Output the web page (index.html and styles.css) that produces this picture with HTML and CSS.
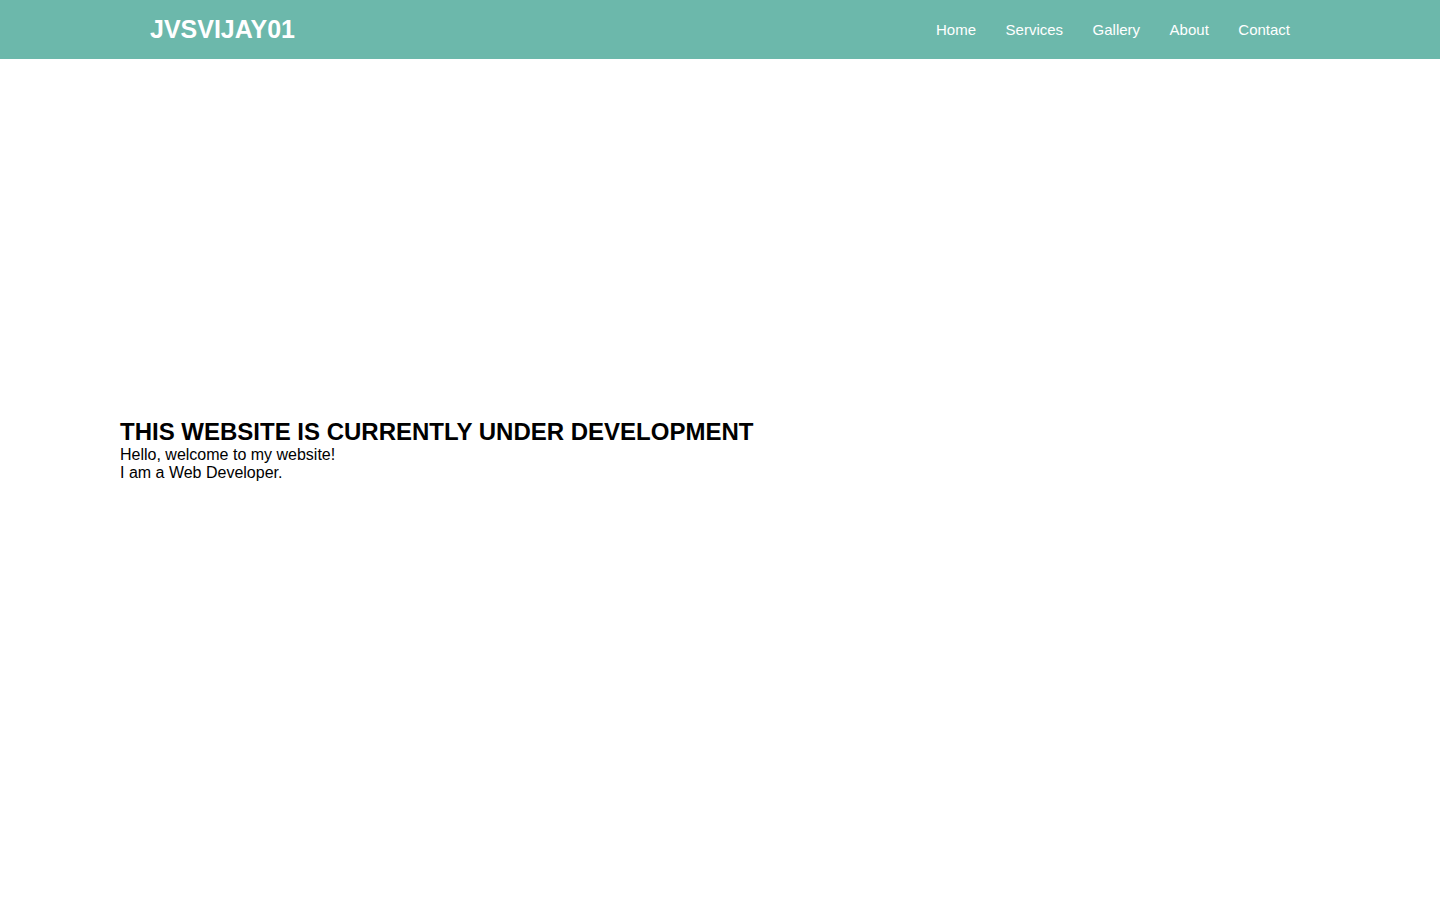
FILE: index.html
```html
<!DOCTYPE html>
<html lang="en">
<head>
<meta charset="utf-8">
<title>JVSVIJAY01</title>
<link rel="stylesheet" href="styles.css">
</head>
<body>
<header class="site-header">
  <div class="logo">JVSVIJAY01</div>
  <nav class="nav">
    <a href="#">Home</a>
    <a href="#">Services</a>
    <a href="#">Gallery</a>
    <a href="#">About</a>
    <a href="#">Contact</a>
  </nav>
</header>
<main class="hero">
  <div class="hero-text">
    <h1>THIS WEBSITE IS CURRENTLY UNDER DEVELOPMENT</h1>
    <p>Hello, welcome to my website!</p>
    <p>I am a Web Developer.</p>
  </div>
</main>
</body>
</html>
```
FILE: styles.css
```css
* { box-sizing: border-box; }
html, body { margin: 0; padding: 0; }
body {
  font-family: "Liberation Sans", Arial, sans-serif;
  color: #000;
  background: #fff;
}
.site-header {
  height: 59px;
  background: #6cb8ab;
  display: flex;
  align-items: center;
  justify-content: space-between;
  padding: 0 150px;
}
.logo {
  color: #fff;
  font-weight: bold;
  font-size: 25px;
}
.nav {
  display: flex;
  gap: 29.5px;
}
.nav a {
  color: #fff;
  text-decoration: none;
  font-size: 15px;
}
.hero {
  height: 841px;
  display: flex;
  flex-direction: column;
  justify-content: center;
  padding: 0 120px 60px;
}
.hero h1 {
  margin: 0;
  font-size: 24px;
  font-weight: bold;
}
.hero p {
  margin: 0;
  font-size: 16px;
}
```
